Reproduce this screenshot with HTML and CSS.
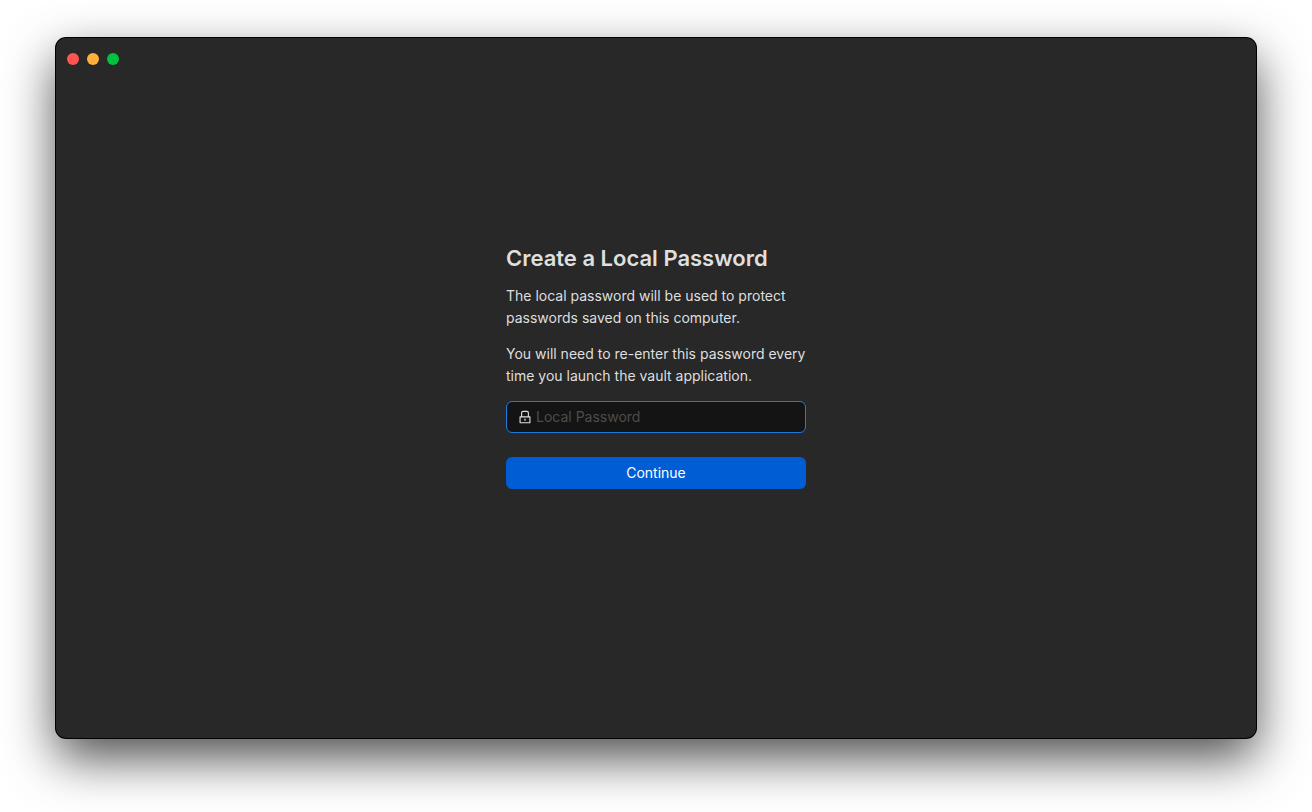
FILE: index.html
```html
<!DOCTYPE html>
<html lang="en">
<head>
<meta charset="utf-8">
<title>Create a Local Password</title>
<link rel="stylesheet" href="styles.css">
</head>
<body>
<div class="window">
  <header class="titlebar">
    <button class="light close" type="button" aria-label="Close"></button>
    <button class="light minimize" type="button" aria-label="Minimize"></button>
    <button class="light maximize" type="button" aria-label="Maximize"></button>
  </header>
  <main class="content">
    <form class="panel">
      <h1 class="title">Create a Local Password</h1>
      <p class="text">The local password will be used to protect passwords saved on this computer.</p>
      <p class="text">You will need to re-enter this password every time you launch the vault application.</p>
      <label class="field">
        <svg class="lock" viewBox="64 64 896 896" aria-hidden="true"><path fill="currentColor" d="M832 464h-68V240c0-70.700-57.300-128-128-128H388c-70.700 0-128 57.300-128 128v224h-68c-17.700 0-32 14.300-32 32v384c0 17.700 14.300 32 32 32h640c17.700 0 32-14.300 32-32V496c0-17.700-14.300-32-32-32zM332 240c0-30.900 25.100-56 56-56h248c30.900 0 56 25.100 56 56v224H332V240zm460 600H232V536h560v304zM484 701v53c0 4.400 3.600 8 8 8h40c4.400 0 8-3.600 8-8v-53a48.010 48.010 0 10-56 0z"/></svg>
        <input class="input" type="password" placeholder="Local Password" aria-label="Local Password">
      </label>
      <button class="submit" type="button">Continue</button>
    </form>
  </main>
</div>
</body>
</html>
```
FILE: styles.css
```css
* { box-sizing: border-box; }
body {
  display: flex;
  min-height: 100vh;
  margin: 0;
  padding: 38px 56px 74px;
  background: #fff;
  color: #dfdfdf;
  font: 400 14px/22px Inter, "Liberation Sans", sans-serif;
}
.window {
  display: flex;
  flex: 1;
  flex-direction: column;
  border-radius: 10px;
  background: #282828;
  box-shadow: 0 0 0 1px #000, 0 20px 50px rgba(0, 0, 0, .7);
}
.titlebar {
  display: flex;
  gap: 8px;
  height: 42px;
  padding: 0 11px;
  align-items: center;
}
.light {
  width: 12px;
  height: 12px;
  padding: 0;
  border: 0;
  border-radius: 50%;
}
.close { background: #ff5450; }
.minimize { background: #ffb039; }
.maximize { background: #00c23e; }
.content {
  display: flex;
  flex: 1;
  justify-content: center;
  padding-top: 162px;
}
.panel {
  display: flex;
  flex-direction: column;
  width: 300px;
}
.title {
  margin: 0 0 11px;
  font-size: 22px;
  font-weight: 600;
  line-height: 32px;
}
.text { margin: 0 0 14px; }
.field {
  display: flex;
  gap: 4px;
  align-items: center;
  height: 32px;
  margin-bottom: 24px;
  padding: 0 11px;
  border: 1px solid #1f7ae0;
  border-radius: 6px;
  background: #141414;
}
.lock { width: 14px; height: 14px; }
.input {
  flex: 1;
  min-width: 0;
  padding: 0;
  border: 0;
  outline: 0;
  background: none;
  color: inherit;
  font: inherit;
}
.input::placeholder { color: #4d4d4d; opacity: 1; }
.submit {
  height: 32px;
  padding: 0;
  border: 0;
  border-radius: 6px;
  background: #005dd4;
  color: #fff;
  font: inherit;
}
```
